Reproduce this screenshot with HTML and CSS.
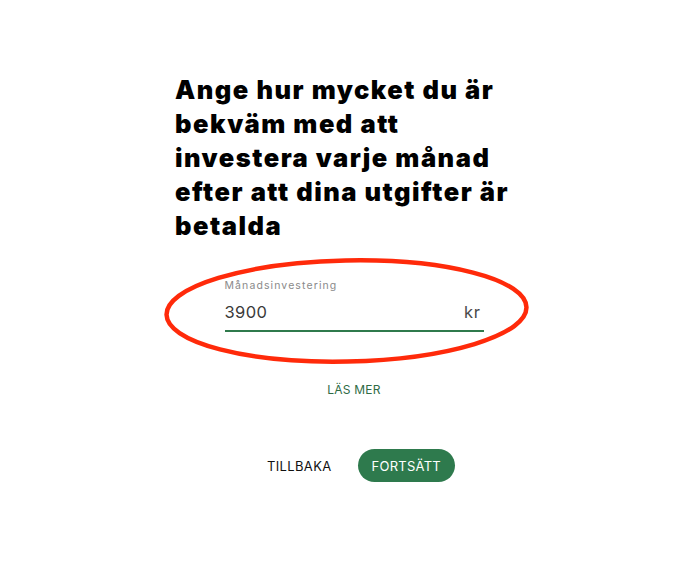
FILE: index.html
```html
<!DOCTYPE html>
<html lang="sv">
<head>
<meta charset="utf-8">
<title>Månadsinvestering</title>
<link rel="stylesheet" href="styles.css">
</head>
<body>
<main class="step">
  <h1 class="question">Ange hur mycket du är<br>bekväm med att<br>investera varje månad<br>efter att dina utgifter är<br>betalda</h1>
  <div class="field-wrap">
    <label class="field">
      <span class="field-label">Månadsinvestering</span>
      <span class="field-row">
        <span class="field-value">3900</span>
        <span class="field-unit">kr</span>
      </span>
    </label>
    <svg class="annotation" viewBox="0 0 372 112" width="372" height="112" aria-hidden="true">
      <ellipse cx="184.5" cy="55" rx="180" ry="50.5" fill="none" stroke="#ff2a0a" stroke-width="4.5" transform="rotate(-1.2 184.5 55)"/>
    </svg>
  </div>
  <a class="read-more" href="#">LÄS MER</a>
  <div class="actions">
    <button class="btn btn-back" type="button">TILLBAKA</button>
    <button class="btn btn-next" type="button">FORTSÄTT</button>
  </div>
</main>
</body>
</html>
```
FILE: styles.css
```css
html, body {
  margin: 0;
  padding: 0;
  background: #ffffff;
}

body {
  font-family: "Inter", "Noto Sans", sans-serif;
  color: #222;
}

.step {
  width: 350px;
  margin: 0 auto;
  padding-top: 73px;
  display: flex;
  flex-direction: column;
}

.question {
  margin: 0;
  font-family: "Inter", sans-serif;
  font-weight: 900;
  font-size: 25.5px;
  line-height: 34px;
  letter-spacing: 1.5px;
  color: #000;
}

.field-wrap {
  position: relative;
  align-self: center;
  margin-top: 36px;
  margin-left: 8px;
  width: 259px;
}

.field {
  display: flex;
  flex-direction: column;
}

.field-label {
  font-size: 10.5px;
  color: #8a8a8a;
  letter-spacing: 1.1px;
  line-height: 14px;
}

.field-row {
  display: flex;
  justify-content: space-between;
  align-items: baseline;
  padding-top: 9px;
  padding-bottom: 8px;
  border-bottom: 2px solid #2f7a4c;
}

.field-value {
  font-size: 16.5px;
  color: #3a3a3a;
  letter-spacing: 0.4px;
}

.field-unit {
  font-size: 16.5px;
  color: #4a4a4a;
  padding-right: 3px;
  letter-spacing: 0.6px;
}

.annotation {
  position: absolute;
  left: -63px;
  top: -23px;
  pointer-events: none;
}

.read-more {
  align-self: center;
  margin-top: 50px;
  margin-left: 8px;
  font-size: 12px;
  color: #2f6b45;
  text-decoration: none;
  letter-spacing: 0.2px;
}

.actions {
  display: flex;
  justify-content: center;
  align-items: center;
  gap: 26px;
  margin-top: 52px;
  margin-left: 22px;
}

.btn {
  font-family: "Inter", sans-serif;
  font-size: 13px;
  border: 0;
  padding: 0;
  background: none;
  cursor: pointer;
  letter-spacing: 0.35px;
}

.btn-back {
  color: #111;
}

.btn-next {
  background: #2e7a4d;
  color: #ffffff;
  height: 33px;
  padding: 0 14px;
  border-radius: 17px;
  letter-spacing: 0.25px;
}
```
